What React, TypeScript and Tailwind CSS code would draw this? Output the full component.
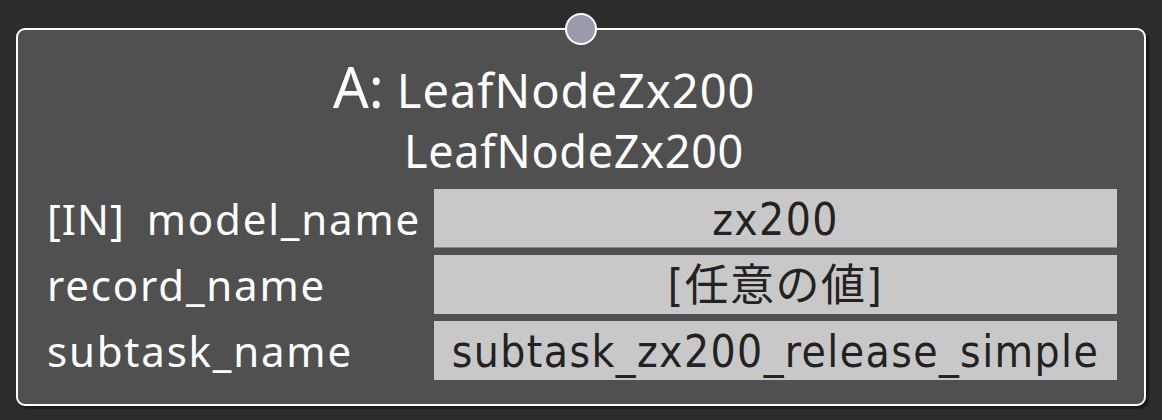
export default function App() {
  const rows = [
    { tag: "[IN]", label: "model_name", value: "zx200", line: true },
    { tag: "", label: "record_name", value: "[任意の値]", line: false },
    { tag: "", label: "subtask_name", value: "subtask_zx200_release_simple", line: false },
  ];

  return (
    <div
      className="w-[1162px] h-[420px] bg-[#2c2c2c] pt-[28px] pl-[16px]"
      style={{ fontFamily: '"Noto Sans", "Noto Sans CJK JP", sans-serif' }}
    >
      <div className="relative w-[1130px] h-[378px] rounded-[9px] border-2 border-white bg-[#505050] shadow-[3px_3px_2px_rgba(0,0,0,0.45)]">
        {/* input port */}
        <div className="absolute left-[547px] top-[-17px] w-[32px] h-[32px] rounded-full border-2 border-white bg-[#9a9aad]" />

        <div className="flex items-baseline pl-[315px] pt-[28px] h-[88px] text-white">
          <span className="text-[56px] leading-none">A:</span>
          <span className="ml-[13px] text-[47px] leading-none tracking-[1px]">LeafNodeZx200</span>
        </div>
        <div className="pl-[386px] h-[71px] pt-[10px] text-white text-[45px] leading-none tracking-[0.7px]">
          LeafNodeZx200
        </div>

        <div className="flex flex-col gap-[7px] pl-[29px] pr-[27px]">
          {rows.map((r) => (
            <div key={r.label} className="flex items-center h-[59px]">
              <div className="w-[387px] flex text-white text-[42px] leading-none tracking-[1.8px] whitespace-nowrap">
                {r.tag && <span className="mr-[22px] tracking-[1px]">{r.tag}</span>}
                <span>{r.label}</span>
              </div>
              <div
                className={
                  "flex-1 h-full bg-[#c8c8c8] flex items-center justify-center pt-[3px] text-[#222] text-[44px] leading-none tracking-[1.4px] whitespace-nowrap " +
                  (r.line ? "border-b border-[#8a8a8a]" : "")
                }
                style={{ fontFamily: '"Liberation Sans Narrow", "DejaVu Sans Condensed", "Noto Sans CJK JP", sans-serif' }}
              >
                {r.value}
              </div>
            </div>
          ))}
        </div>
      </div>
    </div>
  );
}
